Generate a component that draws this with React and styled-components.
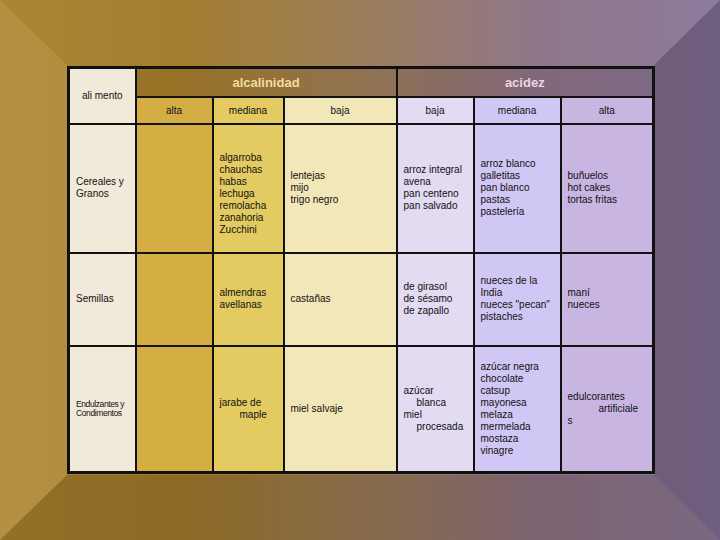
import React from "react";
import styled, { createGlobalStyle } from "styled-components";

const Global = createGlobalStyle`
  html, body { margin: 0; padding: 0; }
  body { font-family: "Liberation Sans", Arial, sans-serif; }
`;

// bevelled frame: the borders are translucent so the gradient shows through them
const Frame = styled.div`
  box-sizing: border-box;
  width: 720px;
  height: 540px;
  border-style: solid;
  border-width: 65px 66px 65px 67px;
  border-color: rgba(255, 255, 255, 0.02) rgba(25, 10, 40, 0.24)
    rgba(40, 20, 0, 0.17) rgba(255, 240, 180, 0.12);
  background: linear-gradient(
    to right,
    #a88430 0%,
    #a27c2c 25%,
    #9a7c58 50%,
    #8e7488 75%,
    #8a7a9c 100%
  );
  background-origin: border-box;
  padding-top: 1px;
`;

const Table = styled.table`
  width: 585px;
  table-layout: fixed;
  border-collapse: collapse;
  border: 3px solid #111;
  font-size: 10px;
  color: #111;
`;

const Col = styled.col`
  width: ${(p) => p.$w}px;
`;

const Row = styled.tr`
  height: ${(p) => p.$h}px;
`;

const GroupHead = styled.th`
  border: 2px solid #111;
  padding: 0;
  background: ${(p) => p.$bg};
  color: ${(p) => p.$fg};
  font-size: 13px;
  font-weight: bold;
  text-align: center;
  vertical-align: middle;
`;

const SubHead = styled.th`
  border: 2px solid #111;
  padding: 0;
  background: ${(p) => p.$bg};
  font-weight: normal;
  font-size: 10px;
  text-align: center;
  vertical-align: middle;
`;

const Cell = styled.td`
  border: 2px solid #111;
  background: ${(p) => p.$bg};
  padding: ${(p) => p.$shift || 0}px 4px 0 6px;
  vertical-align: middle;
  text-align: left;
  line-height: 12px;
`;

const Line = styled.div`
  padding-left: ${(p) => p.$indent || 0}px;
  white-space: nowrap;
`;

const SmallName = styled.div`
  font-size: 8.5px;
  letter-spacing: -0.4px;
  line-height: 9px;
`;

const colors = {
  food: "#f1e9d9",
  alkHigh: "#d4ae42",
  alkMid: "#e3cb62",
  alkLow: "#f1e7b8",
  acLow: "#e2dbf2",
  acMid: "#d1c7f5",
  acHigh: "#c8b5e2",
};

const cols = [
  colors.alkHigh,
  colors.alkMid,
  colors.alkLow,
  colors.acLow,
  colors.acMid,
  colors.acHigh,
];

const rows = [
  {
    name: ["Cereales y", "Granos"],
    h: 129,
    cells: [
      [],
      ["algarroba", "chauchas", "habas", "lechuga", "remolacha", "zanahoria", "Zucchini"],
      ["lentejas", "mijo", "trigo negro"],
      ["arroz integral", "avena", "pan centeno", "pan salvado"],
      ["arroz blanco", "galletitas", "pan blanco", "pastas", "pastelería"],
      ["buñuelos", "hot cakes", "tortas fritas"],
    ],
    shift: [0, 12, 0, 0, 0, 0],
  },
  {
    name: ["Semillas"],
    h: 93,
    cells: [
      [],
      ["almendras", "avellanas"],
      ["castañas"],
      ["de girasol", "de sésamo", "de zapallo"],
      ["nueces de la", "India", 'nueces "pecan"', "pistaches"],
      ["maní", "nueces"],
    ],
  },
  {
    name: ["Endulzantes y", "Condimentos"],
    small: true,
    h: 127,
    cells: [
      [],
      ["jarabe de", { t: "maple", i: 20 }],
      ["miel salvaje"],
      ["azúcar", { t: "blanca", i: 13 }, "miel", { t: "procesada", i: 13 }],
      ["azúcar negra", "chocolate", "catsup", "mayonesa", "melaza", "mermelada", "mostaza", "vinagre"],
      ["edulcorantes", { t: "artificiale", i: 31 }, "s"],
    ],
  },
];

const Lines = ({ items }) =>
  items.map((l, i) =>
    typeof l === "string" ? (
      <Line key={i}>{l}</Line>
    ) : (
      <Line key={i} $indent={l.i}>
        {l.t}
      </Line>
    )
  );

export default function App() {
  return (
    <Frame>
      <Global />
      <Table>
        <colgroup>
          {[67, 77, 71, 113, 77, 87, 93].map((w, i) => (
            <Col key={i} $w={w} />
          ))}
        </colgroup>
        <thead>
          <Row $h={29}>
            <SubHead rowSpan={2} $bg={colors.food}>
              ali mento
            </SubHead>
            <GroupHead
              colSpan={3}
              $bg="linear-gradient(to right, rgba(70,40,0,0.12), rgba(60,30,20,0.1))"
              $fg="#f2dc9c"
            >
              alcalinidad
            </GroupHead>
            <GroupHead
              colSpan={3}
              $bg="linear-gradient(to right, rgba(60,30,20,0.12), rgba(50,20,40,0.14))"
              $fg="#ead6e2"
            >
              acidez
            </GroupHead>
          </Row>
          <Row $h={27}>
            {["alta", "mediana", "baja", "baja", "mediana", "alta"].map((t, i) => (
              <SubHead key={i} $bg={cols[i]}>
                {t}
              </SubHead>
            ))}
          </Row>
        </thead>
        <tbody>
          {rows.map((r, ri) => (
            <Row key={ri} $h={r.h}>
              <Cell $bg={colors.food}>
                {r.small ? (
                  <SmallName>
                    <Lines items={r.name} />
                  </SmallName>
                ) : (
                  <Lines items={r.name} />
                )}
              </Cell>
              {r.cells.map((c, ci) => (
                <Cell key={ci} $bg={cols[ci]} $shift={r.shift ? r.shift[ci] : 0}>
                  <Lines items={c} />
                </Cell>
              ))}
            </Row>
          ))}
        </tbody>
      </Table>
    </Frame>
  );
}
